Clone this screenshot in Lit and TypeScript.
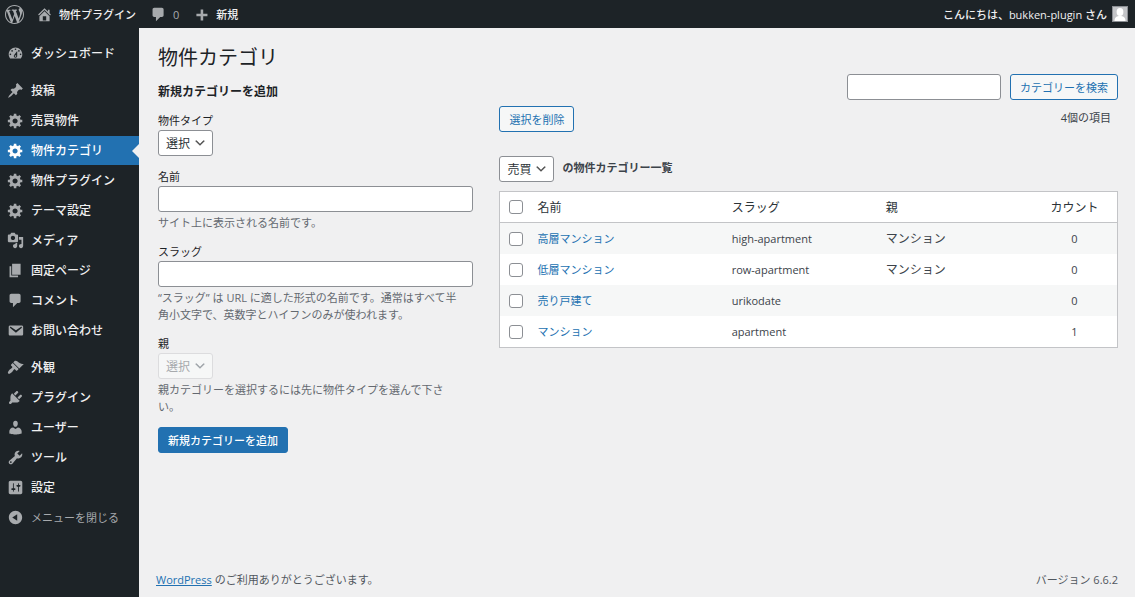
import { LitElement, html, css, svg } from "lit";
import { customElement, property, state } from "lit/decorators.js";

const ICONS: Record<string, string> = {
  wordpress:
    "M20 10c0-5.51-4.49-10-10-10C4.48 0 0 4.49 0 10c0 5.52 4.48 10 10 10 5.51 0 10-4.48 10-10zM7.78 15.37L4.37 6.22c.55-.02 1.17-.08 1.17-.08.5-.06.44-1.13-.06-1.11 0 0-1.45.11-2.37.11-.18 0-.37 0-.58-.01C4.12 2.69 6.87 1.11 10 1.11c2.33 0 4.45.87 6.05 2.34-.68-.11-1.65.39-1.65 1.58 0 .74.45 1.36.9 2.1.35.61.55 1.36.55 2.46 0 1.49-1.4 5-1.4 5l-3.03-8.37c.54-.02.82-.17.82-.17.5-.05.44-1.25-.06-1.22 0 0-1.44.12-2.38.12-.87 0-2.33-.12-2.33-.12-.5-.03-.56 1.2-.06 1.22l.92.08 1.26 3.41zM17.41 10c.24-.64.74-1.87.43-4.25.7 1.29 1.05 2.71 1.05 4.25 0 3.29-1.73 6.24-4.4 7.78.97-2.59 1.94-5.2 2.92-7.78zM6.1 18.09C3.12 16.65 1.11 13.53 1.11 10c0-1.3.23-2.48.72-3.59C3.25 10.3 4.67 14.2 6.1 18.09zm4.03-6.63l2.58 6.98c-.86.29-1.76.45-2.71.45-.79 0-1.57-.11-2.29-.33.81-2.38 1.62-4.74 2.42-7.1z",
  home: "M16 8.5l1.53 1.53-1.06 1.06L10 4.6l-6.47 6.49-1.06-1.06L10 2.5l4 4v-2h2v4zm-6-2.46l6 5.99V18H4v-5.97zM12 17v-5H8v5h4z",
  comments:
    "M5 2h9c1.1 0 2 .9 2 2v7c0 1.1-.9 2-2 2h-2l-5 5v-5H5c-1.1 0-2-.9-2-2V4c0-1.1.9-2 2-2z",
  plus: "M17 9v3h-5v5H9v-5H4V9h5V4h3v5h5z",
  dashboard:
    "M3.76 16h12.48c1.1-1.37 1.76-3.11 1.76-5 0-4.42-3.58-8-8-8s-8 3.58-8 8c0 1.89.66 3.63 1.76 5zM10 4c.55 0 1 .45 1 1s-.45 1-1 1-1-.45-1-1 .45-1 1-1zM6 6c.55 0 1 .45 1 1s-.45 1-1 1-1-.45-1-1 .45-1 1-1zm8 0c.55 0 1 .45 1 1s-.45 1-1 1-1-.45-1-1 .45-1 1-1zm-5.37 5.55L12 7v6c0 1.1-.9 2-2 2s-2-.9-2-2c0-.57.24-1.08.63-1.45zM4 10c.55 0 1 .45 1 1s-.45 1-1 1-1-.45-1-1 .45-1 1-1zm12 0c.55 0 1 .45 1 1s-.45 1-1 1-1-.45-1-1 .45-1 1-1zm-5 3c0-.55-.45-1-1-1s-1 .45-1 1 .45 1 1 1 1-.45 1-1z",
  post: "M10.44 3.02l1.82-1.82 6.36 6.35-1.83 1.82c-1.05-.68-2.48-.57-3.41.36l-.75.75c-.92.93-1.04 2.35-.35 3.41l-1.83 1.82-2.41-2.41-2.8 2.79c-.42.42-3.38 2.71-3.8 2.29s1.86-3.39 2.28-3.81l2.79-2.79L4.1 9.36l1.83-1.82c1.05.69 2.48.57 3.4-.36l.75-.75c.93-.92 1.05-2.35.36-3.41z",
  generic:
    "M18 12h-2.18c-.17.7-.44 1.35-.81 1.93l1.54 1.54-2.1 2.1-1.54-1.54c-.58.36-1.23.63-1.91.79V19H8v-2.18c-.68-.16-1.33-.43-1.91-.79l-1.54 1.54-2.12-2.12 1.54-1.54c-.36-.58-.63-1.23-.79-1.91H1V9.03h2.17c.16-.7.44-1.35.8-1.94L2.43 5.55l2.1-2.1 1.54 1.54c.58-.37 1.24-.64 1.93-.81V2h3v2.18c.68.16 1.33.43 1.91.79l1.54-1.54 2.12 2.12-1.54 1.54c.36.59.64 1.24.8 1.94H18V12zm-8.5 1.5c1.66 0 3-1.34 3-3s-1.34-3-3-3-3 1.34-3 3 1.34 3 3 3z",
  media:
    "M13 11V4c0-.55-.45-1-1-1h-1.67L9 1H5L3.67 3H2c-.55 0-1 .45-1 1v7c0 .55.45 1 1 1h10c.55 0 1-.45 1-1zM7 4.5c1.38 0 2.5 1.12 2.5 2.5S8.38 9.5 7 9.5 4.5 8.38 4.5 7 5.62 4.5 7 4.5zM14 6h5v10.5c0 1.38-1.12 2.5-2.5 2.5S14 17.88 14 16.5s1.12-2.5 2.5-2.5c.17 0 .34.02.5.05V9h-3V6zm-4 8.05V13h2v3.5c0 1.38-1.12 2.5-2.5 2.5S7 17.88 7 16.5 8.12 14 9.5 14c.17 0 .34.02.5.05z",
  page: "M6 15V2h10v13H6zm-1 1h8v2H3V5h2v11z",
  email:
    "M3.87 4h13.25C18.37 4 19 4.59 19 5.79v8.42c0 1.19-.63 1.79-1.88 1.79H3.87c-1.25 0-1.88-.6-1.88-1.79V5.79c0-1.2.63-1.79 1.88-1.79zm6.62 8.6l6.74-5.53c.24-.2.43-.66.13-1.07-.29-.41-.82-.42-1.17-.17l-5.7 3.86L4.8 5.83c-.35-.25-.88-.24-1.17.17-.3.41-.11.87.13 1.07z",
  appearance:
    "M14.48 11.06L7.41 3.99l1.5-1.5c.5-.56 2.3-.47 3.51.32 1.21.8 1.43 1.28 2.91 2.1 1.18.64 2.45 1.26 4.45.85zm-.71.71L6.7 4.7 4.93 6.47c-.39.39-.39 1.02 0 1.41l1.06 1.06c.39.39.39 1.03 0 1.42-.6.6-1.43 1.11-2.21 1.69-.35.26-.7.53-1.01.84C1.43 14.23.4 16.08 1.4 17.07c.99 1 2.84-.03 4.18-1.36.31-.31.58-.66.85-1.02.57-.78 1.08-1.61 1.69-2.21.39-.39 1.02-.39 1.41 0l1.06 1.06c.39.39 1.02.39 1.41 0z",
  plugins:
    "M13.11 4.36L9.87 7.6 8 5.73l3.24-3.24c.35-.34 1.05-.2 1.56.32.52.51.66 1.21.31 1.55zm-8 1.77l.91-1.12 9.01 9.01-1.19.84c-.71.71-2.63 1.16-3.82 1.16H6.14L4.9 17.26c-.59.59-1.54.59-2.12 0-.59-.58-.59-1.53 0-2.12l1.24-1.24v-3.88c0-1.13.4-3.19 1.09-3.89zm7.26 3.97l3.24-3.24c.34-.35 1.04-.21 1.55.31.52.51.66 1.21.31 1.55l-3.24 3.25z",
  users:
    "M10 9.25c-2.27 0-2.73-3.44-2.73-3.44C7 4.02 7.82 2 9.97 2c2.16 0 2.98 2.02 2.71 3.81 0 0-.41 3.44-2.68 3.44zm0 2.57L12.72 10c2.39 0 4.52 2.33 4.52 4.53v2.49s-3.65 1.13-7.24 1.13c-3.65 0-7.24-1.13-7.24-1.13v-2.49c0-2.25 1.94-4.48 4.47-4.48z",
  tools:
    "M16.68 9.77c-1.34 1.34-3.3 1.67-4.95.99l-5.41 6.52c-.99.99-2.59.99-3.58 0s-.99-2.59 0-3.57l6.52-5.42c-.68-1.65-.35-3.61.99-4.95 1.28-1.28 3.12-1.62 4.72-1.06l-2.89 2.89 2.82 2.82 2.86-2.87c.53 1.58.18 3.39-1.08 4.65zM3.81 16.21c.4.39 1.04.39 1.43 0 .4-.4.4-1.04 0-1.43-.39-.4-1.03-.4-1.43 0-.39.39-.39 1.03 0 1.43z",
  settings:
    "M18 16V4c0-1.1-.9-2-2-2H4c-1.1 0-2 .9-2 2v12c0 1.1.9 2 2 2h12c1.1 0 2-.9 2-2zM8 11h1c.55 0 1 .45 1 1s-.45 1-1 1H8v1.5c0 .28-.22.5-.5.5s-.5-.22-.5-.5V13H6c-.55 0-1-.45-1-1s.45-1 1-1h1V5.5c0-.28.22-.5.5-.5s.5.22.5.5V11zm5-2h-1c-.55 0-1-.45-1-1s.45-1 1-1h1V5.5c0-.28.22-.5.5-.5s.5.22.5.5V7h1c.55 0 1 .45 1 1s-.45 1-1 1h-1v5.5c0 .28-.22.5-.5.5s-.5-.22-.5-.5V9z",
  collapse:
    "M10 2.16c4.33 0 7.84 3.51 7.84 7.84s-3.51 7.84-7.84 7.84S2.16 14.33 2.16 10 5.71 2.16 10 2.16zm2 11.72V6.12L6.18 9.97z",
};

@customElement("dash-icon")
class DashIcon extends LitElement {
  static styles = css`
    :host {
      display: block;
      flex: none;
      width: 17px;
      height: 17px;
    }
    .glyph {
      display: block;
      width: 100%;
      height: 100%;
      fill: currentColor;
    }
  `;

  @property() name = "generic";

  render() {
    return html`<svg class="glyph" viewBox="0 0 20 20" aria-hidden="true">
      ${svg`<path fill-rule="evenodd" d=${ICONS[this.name]}></path>`}
    </svg>`;
  }
}

@customElement("admin-bar")
class AdminBar extends LitElement {
  static styles = css`
    :host {
      display: block;
      background: #1d2327;
      color: #f0f0f1;
      font-size: 11px;
      font-weight: 500;
      line-height: 27px;
    }
    .bar {
      display: flex;
      align-items: center;
      height: 28px;
      padding: 0 7px 0 5px;
    }
    .item {
      display: flex;
      align-items: center;
      gap: 6px;
      color: inherit;
      text-decoration: none;
    }
    .icon {
      color: #a7aaad;
    }
    .logo {
      width: 19px;
      height: 19px;
      margin-right: 12px;
    }
    .site,
    .comments {
      margin-right: 14px;
    }
    .count {
      color: #a7aaad;
      font-weight: 400;
    }
    .account {
      gap: 5px;
      margin-left: auto;
    }
    .avatar {
      display: block;
      box-sizing: border-box;
      width: 16px;
      height: 16px;
      border: 1px solid #8c8f94;
      background: #c3c4c7;
    }
  `;

  render() {
    return html`<header class="bar">
      <a class="item" href="#about" aria-label="WordPress">
        <dash-icon class="icon logo" name="wordpress"></dash-icon>
      </a>
      <a class="item site" href="#site">
        <dash-icon class="icon" name="home"></dash-icon>物件プラグイン
      </a>
      <a class="item comments" href="#comments">
        <dash-icon class="icon" name="comments"></dash-icon>
        <span class="count">0</span>
      </a>
      <a class="item" href="#new">
        <dash-icon class="icon" name="plus"></dash-icon>新規
      </a>
      <a class="item account" href="#profile">
        こんにちは、bukken-plugin さん
        <svg class="avatar" viewBox="0 0 14 14" aria-hidden="true">
          <ellipse cx="7" cy="5" rx="3.4" ry="4" fill="#fff"></ellipse>
          <path d="M1.5 14c0-4 2.5-5 5.5-5s5.5 1 5.5 5z" fill="#fff"></path>
        </svg>
      </a>
    </header>`;
  }
}

const MENU: [string, string][][] = [
  [["dashboard", "ダッシュボード"]],
  [
    ["post", "投稿"],
    ["generic", "売買物件"],
    ["generic", "物件カテゴリ"],
    ["generic", "物件プラグイン"],
    ["generic", "テーマ設定"],
    ["media", "メディア"],
    ["page", "固定ページ"],
    ["comments", "コメント"],
    ["email", "お問い合わせ"],
  ],
  [
    ["appearance", "外観"],
    ["plugins", "プラグイン"],
    ["users", "ユーザー"],
    ["tools", "ツール"],
    ["settings", "設定"],
  ],
];

@customElement("admin-menu")
class AdminMenu extends LitElement {
  static styles = css`
    :host {
      display: block;
      background: #1d2327;
      color: #f0f0f1;
      font-size: 12px;
      font-weight: 500;
    }
    .nav {
      display: flex;
      flex-direction: column;
      gap: 8px;
      padding-top: 11px;
    }
    .group {
      display: flex;
      flex-direction: column;
      gap: 1px;
      margin: 0;
      padding: 0;
      list-style: none;
    }
    .entry {
      position: relative;
      display: flex;
      align-items: center;
      gap: 7px;
      width: 100%;
      height: 29px;
      padding: 0 7px;
      box-sizing: border-box;
      border: 0;
      background: none;
      color: inherit;
      font: inherit;
      text-align: left;
      text-decoration: none;
      white-space: nowrap;
    }
    .icon {
      color: #a7aaad;
    }
    .current {
      background: #2271b1;
      color: #fff;
    }
    .current .icon {
      color: #fff;
    }
    .current::after {
      content: "";
      position: absolute;
      top: 50%;
      right: 0;
      margin-top: -7px;
      border: 7px solid transparent;
      border-left-width: 0;
      border-right-color: #f0f0f1;
    }
    .fold {
      color: #a7aaad;
      font-size: 11px;
      font-weight: 400;
    }
  `;

  @property() current = "物件カテゴリ";

  render() {
    return html`<nav class="nav">
      ${MENU.map(
        (group, i) => html`<ul class="group">
          ${group.map(
            ([icon, label]) => html`<li>
              <a class="entry ${label === this.current ? "current" : ""}" href="#${icon}">
                <dash-icon class="icon" name=${icon}></dash-icon>${label}
              </a>
            </li>`
          )}
          ${i === MENU.length - 1
            ? html`<li>
                <button class="entry fold" type="button">
                  <dash-icon class="icon" name="collapse"></dash-icon>メニューを閉じる
                </button>
              </li>`
            : null}
        </ul>`
      )}
    </nav>`;
  }
}

const controls = css`
  .input,
  .select,
  .button {
    box-sizing: border-box;
    height: 26px;
    margin: 0;
    border: 1px solid #8c8f94;
    border-radius: 3px;
    background-color: #fff;
    color: #2c3338;
    font-family: inherit;
    font-size: 12px;
  }
  .input {
    padding: 0 7px;
  }
  .select {
    appearance: none;
    padding: 0 21px 0 7px;
    background-image: url("data:image/svg+xml;charset=US-ASCII,%3Csvg%20width%3D%2220%22%20height%3D%2220%22%20viewBox%3D%220%200%2020%2020%22%20xmlns%3D%22http%3A%2F%2Fwww.w3.org%2F2000%2Fsvg%22%3E%3Cpath%20d%3D%22M5%206l5%205%205-5%202%201-7%207-7-7%202-1z%22%20fill%3D%22%23555%22%2F%3E%3C%2Fsvg%3E");
    background-repeat: no-repeat;
    background-position: right 5px center;
    background-size: 14px 14px;
  }
  .select:disabled {
    border-color: #dcdcde;
    background-color: #f6f7f7;
    background-image: url("data:image/svg+xml;charset=US-ASCII,%3Csvg%20width%3D%2220%22%20height%3D%2220%22%20viewBox%3D%220%200%2020%2020%22%20xmlns%3D%22http%3A%2F%2Fwww.w3.org%2F2000%2Fsvg%22%3E%3Cpath%20d%3D%22M5%206l5%205%205-5%202%201-7%207-7-7%202-1z%22%20fill%3D%22%23a0a5aa%22%2F%3E%3C%2Fsvg%3E");
    color: #a7aaad;
    opacity: 1;
  }
  .button {
    padding: 0 9px;
    border-color: #2271b1;
    background-color: #f6f7f7;
    color: #2271b1;
    font-size: 11px;
    white-space: nowrap;
  }
  .primary {
    background-color: #2271b1;
    color: #fff;
    font-weight: 500;
  }
`;

@customElement("category-form")
class CategoryForm extends LitElement {
  static styles = [
    controls,
    css`
      :host {
        display: block;
      }
      .title {
        margin: 0;
        color: #1d2327;
        font-size: 12px;
        font-weight: 700;
        line-height: 22px;
      }
      .form {
        display: flex;
        flex-direction: column;
        align-items: stretch;
        gap: 12px;
        margin-top: 9px;
      }
      .field {
        display: flex;
        flex-direction: column;
        align-items: flex-start;
      }
      .label {
        margin-bottom: 1px;
        color: #1d2327;
        line-height: 17px;
      }
      .input {
        width: 100%;
      }
      .hint {
        margin: 2px 0 0;
        padding-right: 5%;
        color: #646970;
        line-height: 17px;
      }
      .primary {
        align-self: flex-start;
      }
    `,
  ];

  render() {
    return html`<h2 class="title">新規カテゴリーを追加</h2>
      <form class="form" @submit=${(e: Event) => e.preventDefault()}>
        <div class="field">
          <label class="label" for="type">物件タイプ</label>
          <select class="select" id="type"><option>選択</option></select>
        </div>
        <div class="field">
          <label class="label" for="name">名前</label>
          <input class="input" id="name" type="text" />
          <p class="hint">サイト上に表示される名前です。</p>
        </div>
        <div class="field">
          <label class="label" for="slug">スラッグ</label>
          <input class="input" id="slug" type="text" />
          <p class="hint">“スラッグ” は URL に適した形式の名前です。通常はすべて半角小文字で、英数字とハイフンのみが使われます。</p>
        </div>
        <div class="field">
          <label class="label" for="parent">親</label>
          <select class="select" id="parent" disabled><option>選択</option></select>
          <p class="hint">親カテゴリーを選択するには先に物件タイプを選んで下さい。</p>
        </div>
        <button class="button primary" type="submit">新規カテゴリーを追加</button>
      </form>`;
  }
}

interface Category {
  name: string;
  slug: string;
  parent: string;
  count: number;
}

@customElement("category-list")
class CategoryList extends LitElement {
  static styles = [
    controls,
    css`
      :host {
        display: block;
      }
      .search {
        display: flex;
        justify-content: flex-end;
        gap: 9px;
      }
      .search .input {
        width: 154px;
      }
      .actions {
        display: flex;
        justify-content: space-between;
        align-items: center;
        margin-top: 6px;
        padding-right: 7px;
      }
      .total,
      .caption {
        padding-bottom: 4px;
        line-height: 17px;
      }
      .filter {
        display: flex;
        align-items: center;
        gap: 8px;
        margin: 24px 0 9px;
        font-weight: 700;
      }
      .table {
        width: 100%;
        border: 1px solid #c3c4c7;
        border-spacing: 0;
        background: #fff;
        table-layout: fixed;
      }
      .cell {
        box-sizing: border-box;
        height: 31px;
        padding: 0 8px;
        text-align: left;
        font-weight: 400;
      }
      .head {
        border-bottom: 1px solid #c3c4c7;
        color: #2c3338;
        font-size: 12px;
      }
      .check {
        width: 29px;
        padding: 0 0 0 9px;
      }
      .name {
        width: 31.5%;
      }
      .slug,
      .parent {
        width: 25%;
      }
      .parent {
        font-size: 12px;
      }
      .count {
        text-align: center;
      }
      .row:nth-child(odd) {
        background: #f6f7f7;
      }
      .link {
        color: #2271b1;
        text-decoration: none;
      }
      .box {
        display: block;
        appearance: none;
        box-sizing: border-box;
        width: 14px;
        height: 14px;
        margin: 0;
        border: 1px solid #8c8f94;
        border-radius: 3px;
        background: #fff;
      }
      .box:checked {
        background: #2271b1;
      }
    `,
  ];

  @state() private categories: Category[] = [
    { name: "高層マンション", slug: "high-apartment", parent: "マンション", count: 0 },
    { name: "低層マンション", slug: "row-apartment", parent: "マンション", count: 0 },
    { name: "売り戸建て", slug: "urikodate", parent: "", count: 0 },
    { name: "マンション", slug: "apartment", parent: "", count: 1 },
  ];

  render() {
    return html`<form class="search" role="search" @submit=${(e: Event) => e.preventDefault()}>
        <input class="input" type="search" aria-label="カテゴリーを検索" />
        <button class="button" type="submit">カテゴリーを検索</button>
      </form>
      <div class="actions">
        <button class="button" type="button">選択を削除</button>
        <span class="total">${this.categories.length}個の項目</span>
      </div>
      <div class="filter">
        <select class="select" id="kind"><option>売買</option></select>
        <label class="caption" for="kind">の物件カテゴリー一覧</label>
      </div>
      <table class="table">
        <thead>
          <tr>
            <th class="cell head check"><input class="box" type="checkbox" aria-label="すべて選択" /></th>
            <th class="cell head name">名前</th>
            <th class="cell head slug">スラッグ</th>
            <th class="cell head parent">親</th>
            <th class="cell head count">カウント</th>
          </tr>
        </thead>
        <tbody>
          ${this.categories.map(
            (c) => html`<tr class="row">
              <td class="cell check"><input class="box" type="checkbox" aria-label=${c.name} /></td>
              <td class="cell name"><a class="link" href="#${c.slug}">${c.name}</a></td>
              <td class="cell slug">${c.slug}</td>
              <td class="cell parent">${c.parent}</td>
              <td class="cell count">${c.count}</td>
            </tr>`
          )}
        </tbody>
      </table>`;
  }
}

@customElement("app-root")
class AppRoot extends LitElement {
  static styles = css`
    :host {
      display: flex;
      flex-direction: column;
      min-height: 100vh;
      background: #f0f0f1;
      color: #3c434a;
      font-family: "Open Sans", "Noto Sans CJK JP", sans-serif;
      font-size: 11px;
      line-height: 17px;
    }
    .body {
      display: grid;
      flex: 1;
      grid-template-columns: 139px minmax(0, 1fr);
    }
    .page {
      display: flex;
      flex-direction: column;
      padding: 0 17px 0 19px;
    }
    .heading {
      margin: 0;
      padding-top: 16px;
      color: #1d2327;
      font-size: 20px;
      font-weight: 400;
      line-height: 28px;
    }
    .columns {
      display: grid;
      grid-template-columns: minmax(0, 51fr) minmax(0, 100fr);
      gap: 26px;
      margin-top: 2px;
    }
    .form {
      margin-top: 7px;
    }
    .footer {
      display: flex;
      justify-content: space-between;
      margin-top: auto;
      margin-left: -2px;
      padding: 16px 0 9px;
      color: #50575e;
    }
    .link {
      color: #2271b1;
    }
  `;

  render() {
    return html`<admin-bar></admin-bar>
      <div class="body">
        <admin-menu></admin-menu>
        <div class="page">
          <main>
            <h1 class="heading">物件カテゴリ</h1>
            <div class="columns">
              <category-form class="form"></category-form>
              <category-list></category-list>
            </div>
          </main>
          <footer class="footer">
            <span><a class="link" href="#wordpress">WordPress</a> のご利用ありがとうございます。</span>
            <span>バージョン 6.6.2</span>
          </footer>
        </div>
      </div>`;
  }
}
